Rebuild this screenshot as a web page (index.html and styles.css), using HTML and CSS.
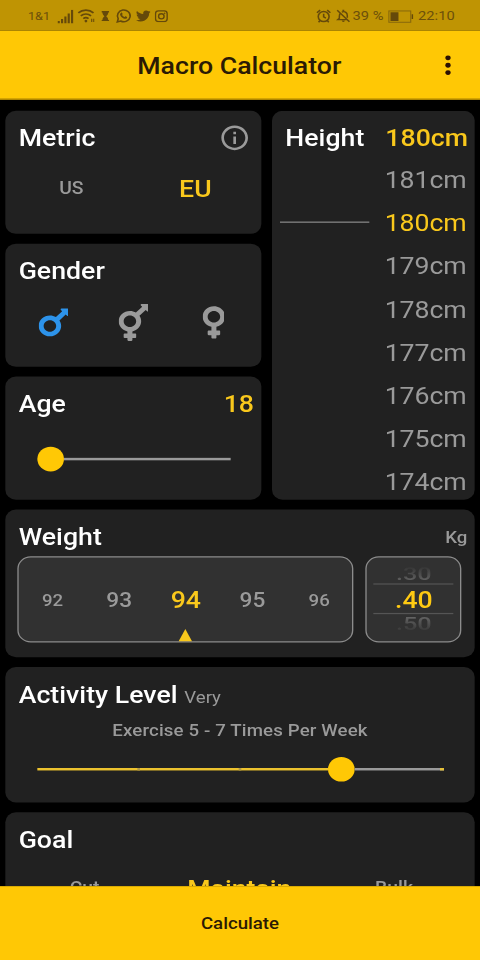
FILE: index.html
```html
<!DOCTYPE html>
<html lang="en">
<head>
<meta charset="utf-8">
<title>Macro Calculator</title>
<link rel="stylesheet" href="styles.css">
</head>
<body>
<div class="screen">
  <div class="status">
    <span class="carrier">1&amp;1</span>
    <svg class="signal" viewBox="0 0 12 11"><path d="M0 9h1.6v2H0zM2.5 7.5h1.6V11H2.500zM5 5.500h1.600V11H5zM7.500 3h1.600v8H7.500zM10 0h1.600v11H10z"/></svg>
    <svg class="wifi" viewBox="0 0 13 11"><path class="line" d="M.7 3.400a8 8 0 0 1 11 0M2.500 5.700a5.400 5.400 0 0 1 7.400 0M4.300 7.900a3 3 0 0 1 3.800 0"/><circle cx="6.200" cy="9.800" r="1"/><path d="M10 8h.8v2.500H10zM11.500 8h.8v2.500h-.8z"/></svg>
    <svg class="hourglass" viewBox="0 0 6 9"><path d="M0 0h6v1.300H5.300C5.300 3 4.500 3.800 3.700 4.500 4.500 5.200 5.300 6 5.300 7.700H6V9H0V7.700h.7C.7 6 1.500 5.200 2.300 4.500 1.500 3.800.7 3 .7 1.300H0z"/></svg>
    <svg class="whatsapp" viewBox="0 0 24 24"><path class="line" d="M2 22l1.500-5.300A10 10 0 1 1 7.300 20.500z"/><path d="M8 6.500c.5-.5 1.300-.4 1.600.3l.7 1.700c.2.500-.7 1.300-.8 1.600.8 1.700 2.200 3 4 3.800.4-.1 1.200-1.500 1.700-1.300l2 1c.5.300.3 1.500-.3 2.200-1.200 1.300-3 1.200-5 .3-2.600-1.200-4.700-3.500-5.400-5.800-.5-1.700.4-3 1.500-3.800z"/></svg>
    <svg class="twitter" viewBox="0 2 24 20"><path d="M23.950 4.570a10 10 0 0 1-2.820.770 4.960 4.960 0 0 0 2.160-2.720c-.95.550-2 .950-3.130 1.180a4.920 4.920 0 0 0-8.380 4.480C7.690 8.090 4.070 6.130 1.640 3.160a4.920 4.920 0 0 0 1.520 6.570 4.900 4.900 0 0 1-2.230-.610v.060a4.920 4.920 0 0 0 3.950 4.830 5 5 0 0 1-2.210.080 4.940 4.940 0 0 0 4.600 3.420A9.870 9.870 0 0 1 0 19.540a14 14 0 0 0 7.550 2.210c9.050 0 14-7.500 14-13.980 0-.210 0-.420-.020-.630a9.940 9.940 0 0 0 2.420-2.570z"/></svg>
    <svg class="instagram" viewBox="0 0 24 24"><rect class="line" x="1.500" y="1.500" width="21" height="21" rx="5.500"/><circle class="line" cx="12" cy="12" r="5"/><circle cx="18" cy="6" r="1.500"/></svg>
    <span class="push"></span>
    <svg class="alarm" viewBox="0 0 24 24"><circle class="line" cx="12" cy="13" r="8.500"/><path class="line" d="M12 8v5.500l3.500 2M1.500 6.500l5-4.500M22.500 6.500l-5-4.500M6 20l-2 2.500M18 20l2 2.500"/></svg>
    <svg class="bell" viewBox="0 0 24 24"><path class="line" d="M2 2l20 20M7 7c-1.300 1.800-1.500 3.500-1.500 6v3L3 18.500h15M9.500 5C15 2.500 18.500 7 18.500 11v4"/><path d="M9.500 20h5a2.500 2.500 0 0 1-5 0zM10.500 1h3v3h-3z"/></svg>
    <span class="percent">39 %</span>
    <svg class="battery" viewBox="0 0 19 11"><rect class="thin" x=".4" y=".9" width="16.400" height="9.200"/><path d="M1.600 2h6v7h-6zM17.500 3.500h1.200v4h-1.200z"/></svg>
    <span class="clock">22:10</span>
  </div>

  <header class="appbar">
    <h1>Macro Calculator</h1>
    <svg class="more" viewBox="0 0 24 24"><circle cx="12" cy="6" r="2"/><circle cx="12" cy="12" r="2"/><circle cx="12" cy="18" r="2"/></svg>
  </header>

  <main class="content">
    <div class="top">
      <div class="stack">
        <section class="card small">
          <div class="head"><h2>Metric</h2>
            <svg class="info" viewBox="0 0 24 24"><path d="M11 17h2v-6h-2v6zm1-15C6.480 2 2 6.480 2 12s4.480 10 10 10 10-4.480 10-10S17.520 2 12 2zm0 18c-4.410 0-8-3.590-8-8s3.590-8 8-8 8 3.590 8 8-3.590 8-8 8zM11 9h2V7h-2v2z"/></svg>
          </div>
          <div class="units"><span>US</span><span class="on">EU</span></div>
        </section>
        <section class="card small">
          <div class="head"><h2>Gender</h2></div>
          <div class="genders">
            <span><svg class="g male" viewBox="0 0 384 512"><path d="M372 64h-79c-10.700 0-16 12.900-8.500 20.400l16.900 16.900-80.700 80.700C198.500 168.100 172.200 160 144 160 64.500 160 0 224.500 0 304s64.500 144 144 144 144-64.500 144-144c0-28.200-8.100-54.500-22.100-76.700l80.700-80.700 16.900 16.900c7.600 7.600 20.400 2.200 20.400-8.500V76c0-6.600-5.400-12-12-12zM144 384c-44.100 0-80-35.900-80-80s35.900-80 80-80 80 35.900 80 80-35.900 80-80 80z"/></svg></span>
            <span><svg class="g" viewBox="0 0 384 512"><path d="M372 0h-79c-10.700 0-16 12.900-8.500 20.400l16.900 16.900-80.700 80.700C198.500 104.100 172.200 96 144 96 64.500 96 0 160.500 0 240c0 68.500 47.900 125.900 112 140.400V408H76c-6.600 0-12 5.400-12 12v40c0 6.600 5.400 12 12 12h36v28c0 6.600 5.400 12 12 12h40c6.600 0 12-5.400 12-12v-28h36c6.600 0 12-5.400 12-12v-40c0-6.600-5.400-12-12-12h-36v-27.600c64.100-14.600 112-71.900 112-140.400 0-28.200-8.100-54.500-22.100-76.700l80.700-80.700 16.900 16.900c7.600 7.600 20.400 2.200 20.400-8.500V12c0-6.600-5.400-12-12-12zM144 320c-44.100 0-80-35.900-80-80s35.900-80 80-80 80 35.900 80 80-35.900 80-80 80z"/></svg></span>
            <span><svg class="g female" viewBox="0 0 288 512"><path d="M288 176c0-79.500-64.500-144-144-144S0 96.500 0 176c0 68.500 47.900 125.900 112 140.400V368H76c-6.600 0-12 5.400-12 12v40c0 6.600 5.400 12 12 12h36v36c0 6.600 5.400 12 12 12h40c6.600 0 12-5.400 12-12v-36h36c6.600 0 12-5.400 12-12v-40c0-6.600-5.400-12-12-12h-36v-51.600c64.100-14.600 112-71.900 112-140.400zm-224 0c0-44.100 35.900-80 80-80s80 35.900 80 80-35.900 80-80 80-80-35.900-80-80z"/></svg></span>
          </div>
        </section>
        <section class="card small">
          <div class="head"><h2>Age</h2><span class="value">18</span></div>
          <div class="slider age"><span class="thumb"></span><span class="rest"></span></div>
        </section>
      </div>
      <section class="card tall">
        <div class="head"><h2>Height</h2><span class="value">180cm</span></div>
        <div class="ruler">
          <span class="mark"></span>
          <ul>
            <li>181cm</li><li class="on">180cm</li><li>179cm</li><li>178cm</li><li>177cm</li><li>176cm</li><li>175cm</li><li>174cm</li>
          </ul>
        </div>
      </section>
    </div>

    <section class="card weight">
      <div class="head"><h2>Weight</h2><span class="kg">Kg</span></div>
      <div class="pickers">
        <div class="box kilos">
          <span>92</span><span class="near">93</span><span class="on">94<i class="pointer"></i></span><span class="near">95</span><span>96</span>
        </div>
        <div class="box grams">
          <span class="faded up">.30</span>
          <span class="chosen">.40</span>
          <span class="faded down">.50</span>
        </div>
      </div>
    </section>

    <section class="card activity">
      <div class="head"><h2>Activity Level</h2><span class="level">Very</span></div>
      <p>Exercise 5 - 7 Times Per Week</p>
      <div class="slider"><span class="done"><i></i><i></i></span><span class="thumb"></span><span class="rest end"></span></div>
    </section>

    <section class="card goal">
      <div class="head"><h2>Goal</h2></div>
      <div class="goals"><span>Cut</span><span class="on">Maintain</span><span>Bulk</span></div>
    </section>
  </main>

  <button class="calculate">Calculate</button>
</div>
</body>
</html>
```
FILE: styles.css
```css
* { box-sizing: border-box; }
html, body { margin: 0; width: 480px; height: 960px; overflow: hidden; background: #000; }
h1, h2, p, ul { margin: 0; padding: 0; list-style: none; }
svg { display: block; flex: none; }

/* Laid out on a 360 x 780 grid, then scaled to the window. */
.screen {
  width: 360px;
  height: 780px;
  display: flex;
  flex-direction: column;
  overflow: hidden;
  transform: scale(1.33333, 1.230769);
  transform-origin: 0 0;
  font-family: Roboto, "Liberation Sans", sans-serif;
  color: #9a9a9a;
}

.status {
  flex: none;
  height: 25px;
  padding: 1px 19px 0 21px;
  display: flex;
  align-items: center;
  background: #bf9403;
  color: #6c500b;
  font-size: 11px;
  line-height: 14px;
  white-space: nowrap;
}
.status svg { fill: #65490a; }
.status .line { fill: none; stroke: #65490a; stroke-width: 2.5; }
.status .thin { fill: none; stroke: #86670c; stroke-width: .8; }
.status .wifi .line { stroke-width: 1.3; }
.carrier { font-size: 9.500px; width: 22px; }
.signal { width: 12.500px; height: 11px; margin-right: 2px; }
.wifi { width: 13.500px; height: 11.400px; margin-right: 4.500px; }
.hourglass { width: 6px; height: 8.500px; margin-right: 5.500px; }
.whatsapp { width: 11.500px; height: 12px; margin-right: 3px; }
.twitter { width: 11px; height: 10px; margin-right: 3.500px; }
.instagram { width: 10px; height: 10.500px; }
.push { flex: 1; }
.alarm { width: 11.500px; height: 12px; margin-right: 3px; }
.bell { width: 11px; height: 12px; margin-right: 1.500px; }
.battery { width: 19.500px; height: 11px; margin: 0 3.500px 0 3px; }

.appbar {
  flex: none;
  height: 56px;
  padding: 0 12px 0 36px;
  display: flex;
  align-items: center;
  background: #ffc805;
  border-bottom: .5px solid #b08600;
}
.appbar h1 {
  flex: 1;
  text-align: center;
  color: #2b1a04;
  font-size: 20px;
  line-height: 24px;
  font-weight: 500;
  padding-top: .5px;
  margin-left: -1px;
}
.more { width: 24px; height: 24px; fill: #2b1004; }

.content { flex: 1; min-height: 0; padding: 9px 4px 0; display: flex; flex-direction: column; gap: 8px; overflow: hidden; }
.top { flex: none; display: flex; gap: 8px; }
.stack { width: 192px; display: flex; flex-direction: column; gap: 8px; }
.card { flex: none; background: #212121; border-radius: 8px; overflow: hidden; }
.small { height: 100px; }
.tall { width: 152px; height: 316px; }
.weight { height: 120px; }
.activity { height: 110px; }
.goal { height: 100px; }

.head { height: 44px; padding: 0 5.500px 0 10px; display: flex; align-items: center; justify-content: space-between; }
.head h2 { color: #fff; font-size: 20px; line-height: 24px; font-weight: 500; letter-spacing: .02px; }
.value { color: #f9c81c; font-size: 20px; line-height: 24px; font-weight: 500; }
.info { width: 24px; height: 24px; margin-right: 2.500px; fill: #9a9a9a; }
.on { color: #f9c81c; }

.units { display: flex; height: 38px; padding: .5px 3px 0; align-items: center; font-size: 14.500px; font-weight: 500; }
.units span { flex: 1; text-align: center; }
.units .on { font-size: 20px; }

.genders { display: flex; padding: 4.600px 6px 0; }
.genders span { flex: 1; display: flex; justify-content: center; }
.g { width: 22.500px; height: 30px; fill: #9a9a9a; }
.male { fill: #2d93ea; }
.female { width: 16.875px; }

.slider { display: flex; height: 20px; align-items: center; padding: 0 23px 0 24px; }
.age { margin-top: 13px; }
.thumb { flex: none; width: 20px; height: 20px; border-radius: 50%; background: #ffc805; }
.rest { flex: 1; height: 2px; background: #9a9a9a; }
.end { border-right: 3px solid #e5c03a; }
.done { width: 218px; height: 2px; background: #ecc22e; display: flex; padding-left: 75px; gap: 74px; }
.done i { width: 2px; height: 2px; background: #b39a45; }

.tall .head { padding-right: 5px; }
.ruler { display: flex; justify-content: space-between; padding: 0 6px 0 5.500px; margin-top: -5px; }
.mark { width: 67.500px; height: 1.200px; margin-top: 50.800px; background: #8a8a8a; }
.ruler li { height: 35px; line-height: 35px; font-size: 20px; text-align: right; letter-spacing: -.05px; }

.kg { font-size: 14px; font-weight: 500; }
.pickers { display: flex; gap: 9px; padding: 0 9.400px; margin-top: -6px; }
.box { height: 70px; border: 1px solid #8c8c8c; border-radius: 10px; background: #313131; font-weight: 500; }
.kilos { width: 252px; display: flex; align-items: center; font-size: 14px; }
.kilos span { width: 50px; text-align: center; line-height: 68px; height: 68px; }
.kilos .near { font-size: 17px; }
.kilos .on { font-size: 20px; position: relative; }
.pointer { position: absolute; left: 20px; bottom: 0; border: 5px solid transparent; border-top: 0; border-bottom: 10px solid #f9c81c; }
.grams { width: 72px; padding: 0 5px; display: flex; flex-direction: column; align-items: center; overflow: hidden; font-size: 20px; }
.chosen { flex: none; width: 60px; height: 25px; line-height: 24.500px; text-align: center; color: #ffca12; border: solid #555; border-width: 1px 0; margin-top: -.300px; }
.faded { flex: none; height: 21.500px; line-height: 21.500px; transform: scaleY(.76); color: transparent; background-clip: text; font-weight: 500; font-size: 19px; }
.up { background-image: linear-gradient(#353535 15%, #666 90%); transform-origin: 50% 100%; }
.down { background-image: linear-gradient(#666 10%, #353535 85%); transform-origin: 50% 0; margin-top: -.5px; }

.activity .head { justify-content: flex-start; align-items: baseline; padding-top: 9.700px; gap: 5px; height: 43px; }
.level { font-size: 14px; }
.activity p { text-align: center; font-size: 14px; line-height: 16px; font-weight: 500; letter-spacing: .1px; }
.activity .slider { margin-top: 14px; }

.goals { display: flex; justify-content: center; align-items: center; height: 35px; font-size: 14.500px; font-weight: 500; margin-left: -1px; }
.goals span { width: 116px; text-align: center; padding-bottom: 1px; }
.goals .on { font-size: 20px; padding-bottom: 0; }

.calculate {
  flex: none;
  height: 60px;
  border: 0;
  background: #ffc805;
  color: #2b1a04;
  font: 500 14px/16px Roboto, "Liberation Sans", sans-serif;
}
```
